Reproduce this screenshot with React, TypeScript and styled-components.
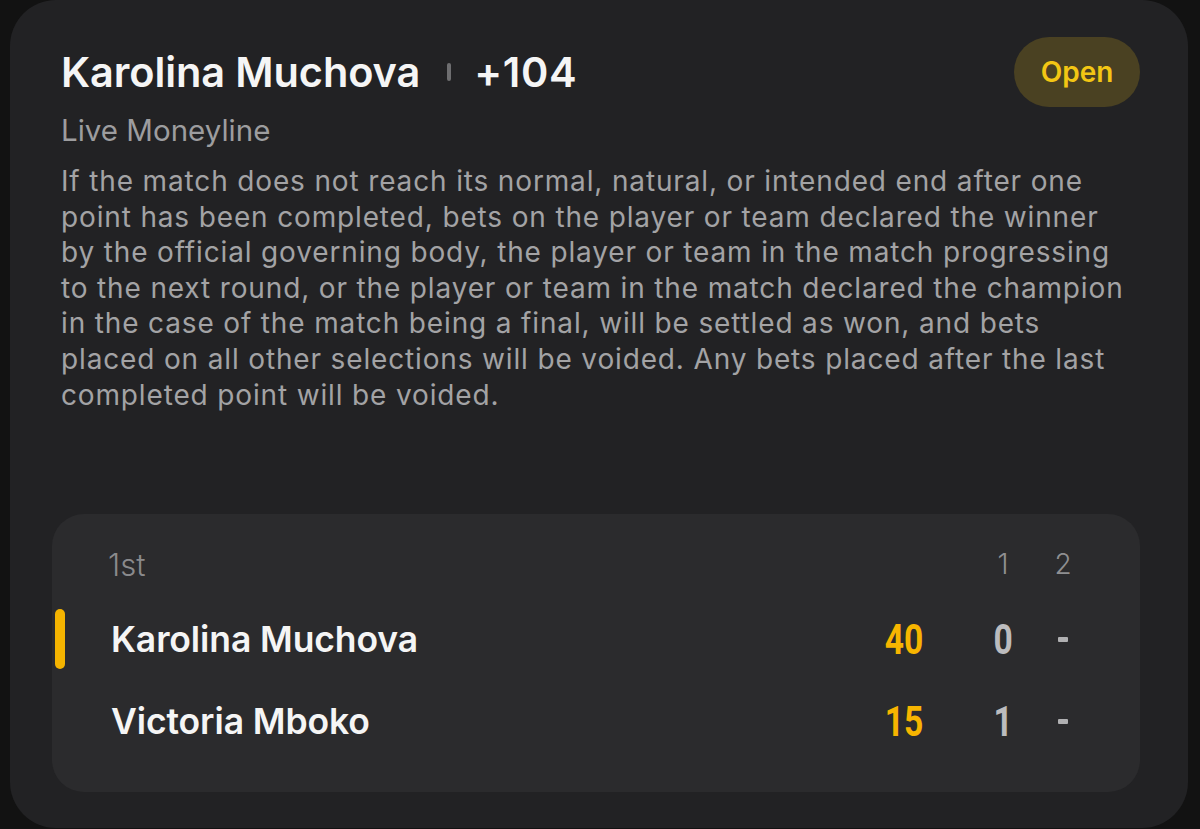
import React from "react";
import styled, { createGlobalStyle } from "styled-components";

const Global = createGlobalStyle`
  html, body { margin: 0; padding: 0; background: #121212; }
  body { font-family: Inter, "Noto Sans", sans-serif; -webkit-font-smoothing: antialiased; }
  * { box-sizing: border-box; }
`;

const Page = styled.div`
  width: 1200px;
  height: 829px;
  padding: 0 12px 1px 10px;
  background: #121212;
  overflow: hidden;
`;

const Card = styled.div`
  height: 828px;
  background: #222224;
  border-radius: 46px;
  padding: 37px 48px 0 51px;
  display: flex;
  flex-direction: column;
`;

const Header = styled.div`
  display: flex;
  align-items: center;
  justify-content: space-between;
  height: 70px;
`;

const TitleRow = styled.div`
  display: flex;
  align-items: center;
  color: #f5f5f5;
  font-size: 41.5px;
  font-weight: 600;
  letter-spacing: -0.1px;
`;

const Divider = styled.span`
  width: 4px;
  height: 18px;
  margin: 0 23px 0 27px;
  border-radius: 2px;
  background: #6e6e70;
`;

const Odds = styled.span`
  letter-spacing: 0.6px;
`;

const Pill = styled.div`
  width: 126px;
  height: 70px;
  border-radius: 35px;
  background: #4a4122;
  color: #f3c614;
  font-size: 28px;
  font-weight: 600;
  display: flex;
  align-items: center;
  justify-content: center;
`;

const Subtitle = styled.div`
  margin-top: 5px;
  color: #9d9d9f;
  font-size: 29.5px;
  line-height: 36px;
`;

const Body = styled.p`
  margin: 16px 0 0;
  max-width: 1078px;
  color: #a3a3a5;
  font-size: 28px;
  letter-spacing: 0.85px;
  line-height: 35.6px;
`;

const ScoreBox = styled.div`
  margin: auto 0 36px -9px;
  width: 1088px;
  background: #2b2b2d;
  border-radius: 32px;
  padding: 27px 47px 41px 59px;
  display: grid;
  grid-template-columns: 1fr 110px 60px 60px;
  row-gap: 22px;
`;

const HeaderCell = styled.div<{ $center?: boolean }>`
  height: 46px;
  display: flex;
  align-items: center;
  justify-content: ${(p) => (p.$center ? "center" : "flex-start")};
  margin-left: ${(p) => (p.$center ? "0" : "-3px")};
  color: ${(p) => (p.$center ? "#8f8f91" : "#8a8a8c")};
  font-size: ${(p) => (p.$center ? "28px" : "31px")};
  font-weight: 300;
`;

const NameCell = styled.div`
  position: relative;
  height: 60px;
  display: flex;
  align-items: center;
  color: #f5f5f5;
  font-size: 35.5px;
  font-weight: 600;
  letter-spacing: -0.1px;
`;

const Marker = styled.span`
  position: absolute;
  left: -56px;
  top: 0;
  width: 10px;
  height: 60px;
  border-radius: 5px;
  background: #f5b400;
`;

const ScoreCell = styled.div<{ $kind: "points" | "set" | "empty" }>`
  height: 60px;
  display: flex;
  align-items: center;
  justify-content: ${(p) => (p.$kind === "points" ? "flex-end" : "center")};
  padding-right: ${(p) => (p.$kind === "points" ? "50px" : "0")};
  color: ${(p) => (p.$kind === "points" ? "#f7b500" : "#bcbcbe")};
`;

const Digits = styled.span<{ $origin: "right" | "center" }>`
  display: inline-block;
  font-family: Roboto, "Liberation Sans", sans-serif;
  font-size: 42px;
  font-weight: 700;
  transform: scaleX(0.8);
  transform-origin: ${(p) => p.$origin};
`;

const Dash = styled.span`
  width: 10px;
  height: 5px;
  border-radius: 1px;
  background: #b0b0b2;
`;

type Player = { name: string; points: string; set1: string; active?: boolean };

const players: Player[] = [
  { name: "Karolina Muchova", points: "40", set1: "0", active: true },
  { name: "Victoria Mboko", points: "15", set1: "1" },
];

export default function App() {
  return (
    <>
      <Global />
      <Page>
        <Card>
          <Header>
            <TitleRow>
              <span>Karolina Muchova</span>
              <Divider />
              <Odds>+104</Odds>
            </TitleRow>
            <Pill>Open</Pill>
          </Header>
          <Subtitle>Live Moneyline</Subtitle>
          <Body>
            If the match does not reach its normal, natural, or intended end after one point has been
            completed, bets on the player or team declared the winner by the official governing body, the
            player or team in the match progressing to the next round, or the player or team in the match
            declared the champion in the case of the match being a final, will be settled as won, and bets
            placed on all other selections will be voided. Any bets placed after the last completed point
            will be voided.
          </Body>
          <ScoreBox>
            <HeaderCell>1st</HeaderCell>
            <HeaderCell />
            <HeaderCell $center>1</HeaderCell>
            <HeaderCell $center>2</HeaderCell>
            {players.map((p) => (
              <React.Fragment key={p.name}>
                <NameCell>
                  {p.active && <Marker />}
                  {p.name}
                </NameCell>
                <ScoreCell $kind="points">
                  <Digits $origin="right">{p.points}</Digits>
                </ScoreCell>
                <ScoreCell $kind="set">
                  <Digits $origin="center">{p.set1}</Digits>
                </ScoreCell>
                <ScoreCell $kind="empty">
                  <Dash />
                </ScoreCell>
              </React.Fragment>
            ))}
          </ScoreBox>
        </Card>
      </Page>
    </>
  );
}
